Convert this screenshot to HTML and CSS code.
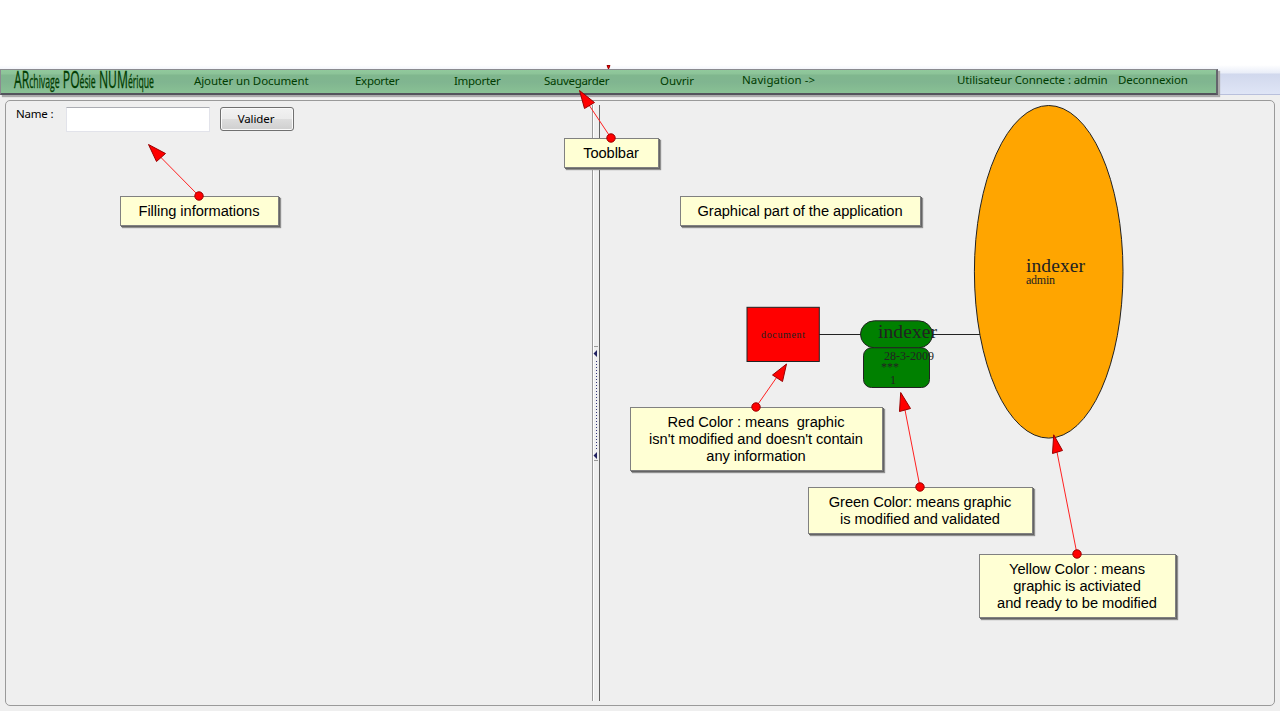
FILE: index.html
```html
<!DOCTYPE html>
<html lang="fr">
<head>
<meta charset="utf-8">
<title>ARchivage POésie NUMérique</title>
<link rel="stylesheet" href="styles.css">
</head>
<body>
<div class="app">
  <header class="header">
    <nav class="toolbar">
      <svg class="logo" width="160" height="23" viewBox="0 0 160 23">
        <text class="small" x="13" y="17.500" textLength="140" lengthAdjust="spacingAndGlyphs"><tspan class="big">AR</tspan>chivage <tspan class="big">PO</tspan>ésie <tspan class="big">NUM</tspan>érique</text>
      </svg>
      <a class="item">Ajouter un Document</a>
      <a class="item tight">Exporter</a>
      <a class="item tight">Importer</a>
      <a class="item tight">Sauvegarder</a>
      <a class="item">Ouvrir</a>
      <a class="item raised loose">Navigation -&gt;</a>
      <span class="item raised">Utilisateur Connecte : admin</span>
      <a class="item raised">Deconnexion</a>
    </nav>
  </header>
  <main class="workspace">
    <form class="form">
      <label class="label" for="name">Name :</label>
      <input class="field" id="name" type="text">
      <button class="button" type="button">Valider</button>
    </form>
    <div class="splitter">
      <svg class="grip" width="6" height="116" viewBox="0 0 6 116">
        <path d="M1 .5H5M1 114.500H5" stroke="#9a9a9a"/>
        <path d="M.5 7.500L4 4V11ZM.5 109.500L4 106V113Z" fill="#202060"/>
        <path d="M3.500 15V104" stroke="#303078" stroke-dasharray="1 2"/>
      </svg>
    </div>
    <section class="graph"></section>
  </main>
</div>

<svg class="overlay" width="1280" height="711" viewBox="0 0 1280 711">
  <g stroke="#222" stroke-width="1">
    <path d="M819 334.500H980"/>
    <rect x="747" y="307.300" width="72.300" height="54.200" fill="#f00"/>
    <rect x="860.500" y="320.800" width="72" height="27" rx="14" fill="#008000"/>
    <rect x="863.500" y="347.800" width="66" height="39.700" rx="8" fill="#008000"/>
    <ellipse cx="1048.700" cy="271.800" rx="74.300" ry="166.300" fill="#ffa500"/>
  </g>
  <g class="node-text">
    <text x="761" y="338" font-size="10" textLength="44">document</text>
    <text x="878" y="338" font-size="19.500" textLength="59">indexer</text>
    <text x="884" y="360" font-size="12" textLength="50">28-3-2009</text>
    <text x="881" y="371" font-size="12" textLength="18">***</text>
    <text x="890" y="384" font-size="12">1</text>
    <text x="1026" y="272" font-size="19.500" textLength="59">indexer</text>
    <text x="1026" y="284" font-size="12" textLength="29">admin</text>
  </g>
</svg>

<div class="note n-toolbar">Tooblbar</div>
<div class="note n-form">Filling informations</div>
<div class="note n-graph">Graphical part of the application</div>
<div class="note n-red">Red Color : means&nbsp; graphic<br>isn't modified and doesn't contain<br>any information</div>
<div class="note n-green">Green Color: means graphic<br>is modified and validated</div>
<div class="note n-yellow">Yellow Color : means<br>graphic is activiated<br>and ready to be modified</div>

<svg class="overlay" width="1280" height="711" viewBox="0 0 1280 711">
  <g stroke="#ff2020" fill="none">
    <line x1="199" y1="196" x2="160" y2="156.500"/>
    <line x1="611" y1="138" x2="589" y2="105"/>
    <line x1="756" y1="407" x2="779" y2="374"/>
    <line x1="920" y1="487" x2="905" y2="410"/>
    <line x1="1077" y1="554" x2="1057" y2="452"/>
  </g>
  <g fill="#f00" stroke="#900" stroke-width="1">
    <path d="M148.500 144.500L165.500 153.500L156.500 161.500Z"/>
    <path d="M579.500 90.500L594.500 102.500L584.500 108.500Z"/>
    <path d="M786.500 364L772.500 375L782.500 381.500Z"/>
    <path d="M900.700 392.500L899.500 411.500L910.500 408.500Z"/>
    <path d="M1053.700 434.800L1052.500 453.500L1062.500 450.500Z"/>
    <path d="M607 65.500H610L608.500 69Z"/>
    <circle cx="199" cy="196" r="4.200"/>
    <circle cx="611" cy="138" r="4.200"/>
    <circle cx="756" cy="407" r="4.200"/>
    <circle cx="920" cy="487" r="4.200"/>
    <circle cx="1077" cy="554" r="4.200"/>
  </g>
</svg>
</body>
</html>
```
FILE: styles.css
```css
* { box-sizing: border-box; }
body { margin: 0; background: #efefef; font-family: "Noto Sans", "Open Sans", sans-serif; font-size: 11.5px; color: #000; overflow: hidden; }
.app { width: 1280px; height: 711px; display: flex; flex-direction: column; }
.header { flex: none; height: 95px; padding-top: 69px; border-bottom: 1px solid #b9c0dc; background: linear-gradient(#fff 0 65px, #e9edf8 73px, #d1d8ed 74px, #dfe5f6 94px); }
.toolbar { width: 1218px; height: 26px; display: grid; grid-template-columns: 193px 161px 99px 90px 116px 82px 215px 161px 90px; border: 1px solid #8b8b90; border-right: 2px solid #64646c; border-bottom: 2px solid #53535c; background: linear-gradient(#91c99c 0, #8cc398 4px, #80b78e 5px, #80b590 12px, #89c194 100%); box-shadow: 2px 2px 1px #aaa; color: #003c00; position: relative; }
.item { white-space: nowrap; line-height: 16px; padding-top: 3px; letter-spacing: -.1px; }
.tight { letter-spacing: -.3px; }
.loose { letter-spacing: .1px; }
.raised { padding-top: 2px; }
.logo { display: block; overflow: visible; }
.logo text { fill: #003c00; stroke: #003c00; stroke-width: .3px; font-family: "Open Sans", sans-serif; word-spacing: 2px; }
.big { font-size: 24.5px; }
.small { font-size: 17.5px; }
.workspace { flex: none; height: 606px; margin: 5px 5px 0; border: 1px solid #9a9a9a; border-radius: 5px; display: flex; padding: 4px 0; }
.form { width: 586px; display: flex; align-items: flex-start; padding: 2px 0 0 10px; }
.label { width: 50px; line-height: 16px; margin-top: -1px; letter-spacing: -.2px; }
.field { width: 144px; height: 25px; border: 1px solid #e2e3ea; border-top-color: #abadb3; background: #fff; padding: 0; }
.button { width: 74px; height: 24px; margin-left: 10px; border: 1px solid #707070; border-radius: 3px; box-shadow: inset 0 0 0 1px #fafafa; background: linear-gradient(#f2f2f2 0, #ebebeb 50%, #ddd 51%, #cfcfcf 100%); font: 11.5px "Noto Sans", sans-serif; padding: 0 2px 0 0; letter-spacing: -.1px; line-height: 16px; }
.splitter { width: 8px; border-left: 1px solid #9a9a9a; border-right: 1px solid #646464; box-shadow: inset 1px 0 #fff; display: flex; align-items: flex-start; padding-top: 241px; }
.grip { flex: none; display: block; }
.graph { flex: 1; }
.overlay { position: absolute; left: 0; top: 0; pointer-events: none; }
.node-text { font-family: "Liberation Serif", serif; fill: #222; }
.note { position: absolute; background: #ffffd4; border: 1px solid #808080; box-shadow: 1px 1px #646464, 2px 2px 1px #909090; text-align: center; font: 14.67px/17px "Liberation Sans", sans-serif; padding: 6px 1px 0 0; white-space: nowrap; letter-spacing: -.06px; }
.n-toolbar { left: 564px; top: 138px; width: 95px; height: 30px; }
.n-form { left: 120px; top: 196px; width: 159px; height: 30px; }
.n-graph { left: 680px; top: 196px; width: 241px; height: 30px; }
.n-red { left: 630px; top: 407px; width: 253px; height: 64px; }
.n-green { left: 808px; top: 487px; width: 225px; height: 47px; }
.n-yellow { left: 979px; top: 554px; width: 197px; height: 64px; }
```
